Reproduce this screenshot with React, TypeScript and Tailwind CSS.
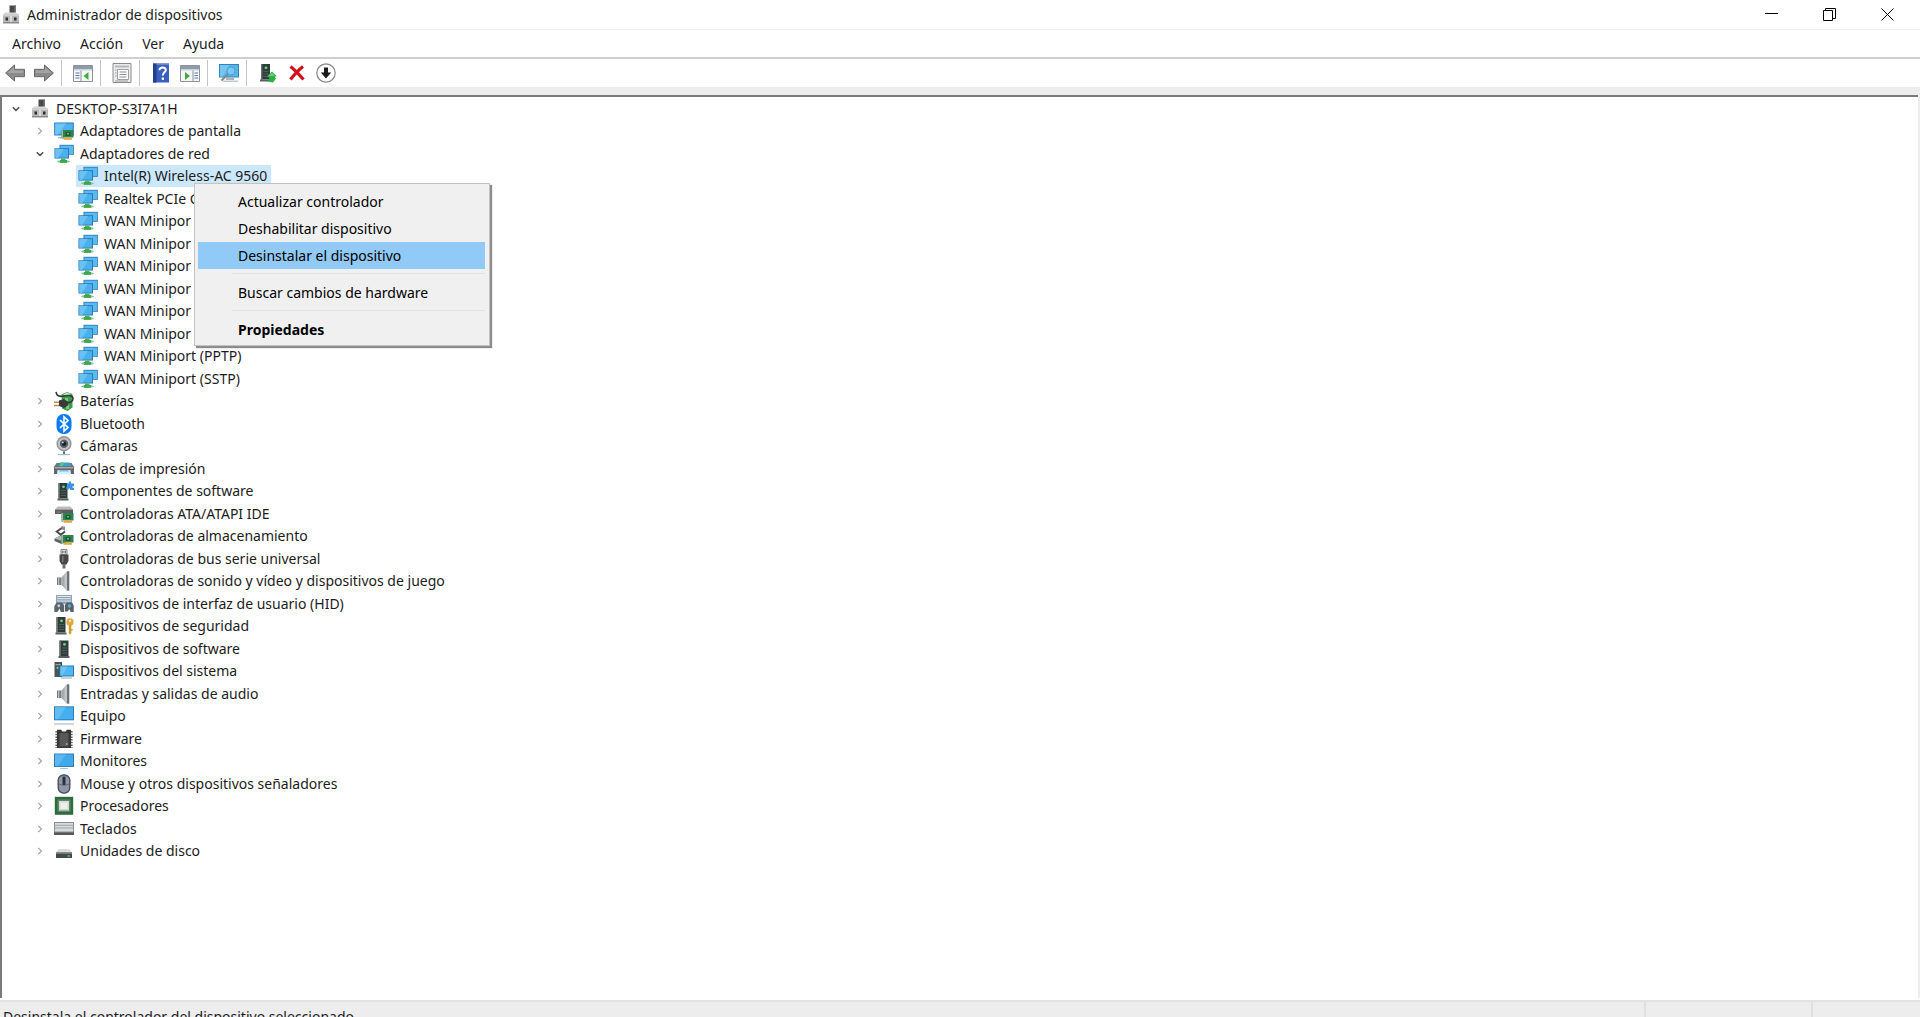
import type { ReactNode } from 'react';

type IconName =
  | 'computer' | 'display' | 'network' | 'battery' | 'bluetooth' | 'camera' | 'printer' | 'component'
  | 'ata' | 'storage' | 'usb' | 'speaker' | 'hid' | 'security' | 'software' | 'system' | 'pc'
  | 'firmware' | 'monitor' | 'mouse' | 'cpu' | 'keyboard' | 'disk';

interface TreeNode {
  label: string;
  icon: IconName;
  level: 0 | 1 | 2;
  expanded?: boolean;
  selected?: boolean;
}

const nodes: TreeNode[] = [
  { label: 'DESKTOP-S3I7A1H', icon: 'computer', level: 0, expanded: true },
  { label: 'Adaptadores de pantalla', icon: 'display', level: 1 },
  { label: 'Adaptadores de red', icon: 'network', level: 1, expanded: true },
  { label: 'Intel(R) Wireless-AC 9560', icon: 'network', level: 2, selected: true },
  { label: 'Realtek PCIe G', icon: 'network', level: 2 },
  { label: 'WAN Minipor', icon: 'network', level: 2 },
  { label: 'WAN Minipor', icon: 'network', level: 2 },
  { label: 'WAN Minipor', icon: 'network', level: 2 },
  { label: 'WAN Minipor', icon: 'network', level: 2 },
  { label: 'WAN Minipor', icon: 'network', level: 2 },
  { label: 'WAN Minipor', icon: 'network', level: 2 },
  { label: 'WAN Miniport (PPTP)', icon: 'network', level: 2 },
  { label: 'WAN Miniport (SSTP)', icon: 'network', level: 2 },
  { label: 'Baterías', icon: 'battery', level: 1 },
  { label: 'Bluetooth', icon: 'bluetooth', level: 1 },
  { label: 'Cámaras', icon: 'camera', level: 1 },
  { label: 'Colas de impresión', icon: 'printer', level: 1 },
  { label: 'Componentes de software', icon: 'component', level: 1 },
  { label: 'Controladoras ATA/ATAPI IDE', icon: 'ata', level: 1 },
  { label: 'Controladoras de almacenamiento', icon: 'storage', level: 1 },
  { label: 'Controladoras de bus serie universal', icon: 'usb', level: 1 },
  { label: 'Controladoras de sonido y vídeo y dispositivos de juego', icon: 'speaker', level: 1 },
  { label: 'Dispositivos de interfaz de usuario (HID)', icon: 'hid', level: 1 },
  { label: 'Dispositivos de seguridad', icon: 'security', level: 1 },
  { label: 'Dispositivos de software', icon: 'software', level: 1 },
  { label: 'Dispositivos del sistema', icon: 'system', level: 1 },
  { label: 'Entradas y salidas de audio', icon: 'speaker', level: 1 },
  { label: 'Equipo', icon: 'pc', level: 1 },
  { label: 'Firmware', icon: 'firmware', level: 1 },
  { label: 'Monitores', icon: 'monitor', level: 1 },
  { label: 'Mouse y otros dispositivos señaladores', icon: 'mouse', level: 1 },
  { label: 'Procesadores', icon: 'cpu', level: 1 },
  { label: 'Teclados', icon: 'keyboard', level: 1 },
  { label: 'Unidades de disco', icon: 'disk', level: 1 },
];

const indent = ['pl-0', 'pl-6', 'pl-12'];

// Small green board with gold contacts, shared by the adapter icons
const board = (
  <>
    <path d="M7.500 9h12v7.500h-12z" fill="#2f8350" />
    <path d="M7.500 9h1.500v9h-1.500z" fill="#9db8a4" />
    <path d="M11.500 11h5v4h-5z" fill="#1c5a36" />
    <path d="M13 12h2v1.500h-2z" fill="#6fb98a" />
    <path d="M9.500 16.500h8.500v2.300h-8.500z" fill="#e5a93c" />
  </>
);

const tower = (
  <>
    <path d="M5 1h9v15.500H5z" fill="#2f3c3b" />
    <path d="M5 1h1.500v15.500H5z" fill="#66716f" />
    <path d="M7.500 8.500h5M7.500 11h5M7.500 13.500h5" stroke="#4f5d5b" strokeWidth="1" />
    <circle cx="10" cy="4.800" r="1.400" fill="#56e07a" />
    <path d="M4 16.500h11v2H4z" fill="#59605f" />
  </>
);

const icons: Record<IconName, ReactNode> = {
  computer: (
    <>
      <path d="M8.500 .5H15v9H8.500z" fill="#4a4a4a" />
      <path d="M13.500 .5H15v9h-1.500z" fill="#777" />
      <path d="M3 9l1-1.500h11L16.500 9z" fill="#d8d8d8" />
      <path d="M2 9h16v9H2z" fill="#b8b8b8" />
      <path d="M2 9h16v2H2z" fill="#cfcfcf" />
      <path d="M2 17h16v1.500H2z" fill="#8b8b8b" />
      <path d="M4.500 12.500h2.500v3H4.500zM13 12.500h2.500v3H13z" fill="#2e2e2e" />
      <path d="M9.200 11h1.600v6H9.200z" fill="#e4e4e4" />
    </>
  ),
  display: (
    <>
      <path d="M.2 1.500h19.600v13H.2z" fill="#2279ba" />
      <path d="M1.200 2.500h17.600v11H1.200z" fill="#4fb2ec" />
      <path d="M1.200 2.500h11l-8 11h-3z" fill="#6fc5f5" />
      <path d="M4 16h6v1.500H4z" fill="#a9bccb" />
      {board}
    </>
  ),
  network: (
    <>
      <path d="M5.500 .8h14.300v10H5.500z" fill="#2779b4" />
      <path d="M6.300 1.600H19v8.400H6.300z" fill="#58baf0" />
      <path d="M.5 4.300h14.500v10.200H.5z" fill="#236fa8" />
      <path d="M1.300 5.100h12.900v8.600H1.300z" fill="#4bb0ec" />
      <path d="M1.300 5.100h8.500l-5.500 8.600h-3z" fill="#68c2f5" />
      <path d="M7 14.500h4.500v2.500H7z" fill="#4cb05e" />
      <ellipse cx="9.500" cy="17.500" rx="6.500" ry="1.500" fill="#7ecb8a" />
      <path d="M6 16h7v2.800H6z" fill="#3fa552" />
    </>
  ),
  battery: (
    <>
      <path d="M7.500 3.500L13 1l5.500 2v13.500L13.500 20 8 17.500z" fill="#3f9a4a" />
      <path d="M9 3.500l4-2 4 1.600-4 1.900z" fill="#bfe0c0" />
      <path d="M11 7h3v3h-3zM12 14h3v4h-3z" fill="#74cf78" />
      <path d="M2 .8c.5 4 3 5.200 8 4.200s9-.5 9 2.500-3 4.500-6 4" stroke="#333b36" strokeWidth="1.600" fill="none" />
      <path d="M5 9.500L10 8l4 3v3.500L10 17l-5-2z" fill="#3a3a36" />
      <path d="M0 10.500h5V12H0zM0 13.800h5v1.500H0z" fill="#b39159" />
    </>
  ),
  bluetooth: (
    <>
      <rect x="2.500" y="0" width="15" height="20" rx="7" fill="#0a7cf0" />
      <path d="M6 6.200l8 7.300-4 3.700V2.800l4 3.700-8 7.300" fill="none" stroke="#fff" strokeWidth="1.600" />
    </>
  ),
  camera: (
    <>
      <circle cx="10" cy="7.700" r="7.600" fill="#97999b" />
      <circle cx="10" cy="7.700" r="6" fill="#c5c8ca" />
      <circle cx="10" cy="7.700" r="4.200" fill="#5b6064" />
      <circle cx="10" cy="7.700" r="2.200" fill="#1c2228" />
      <circle cx="8.800" cy="6.500" r="1" fill="#b9c5cf" />
      <path d="M9 15.300h2v3H9z" fill="#707274" />
      <path d="M4 18h12v1.200H4z" fill="#9fc0d0" />
    </>
  ),
  printer: (
    <>
      <path d="M2.500 4h15L20 8H0z" fill="#6c777e" />
      <path d="M6 3.500h9.500l1.500 4H4.500z" fill="#3f9fc4" />
      <path d="M7 3.500h3.500l-2 4H5.500z" fill="#58c294" />
      <path d="M0 7.500h20V15h-3.500v-3.500h-13V15H0z" fill="#62676b" />
      <path d="M.8 8h18.400v1.500H.8z" fill="#a5abae" />
      <path d="M4 11h12l1 4.500H3z" fill="#d6edf9" />
      <path d="M5.500 11h9l.5 1.500H5z" fill="#7dbfe3" />
    </>
  ),
  component: (
    <>
      <g transform="translate(-.5 1)">{tower}</g>
      <path d="M12.500 2.500h2.200v-2h2.300v2h3v2.800h-1.500v1.500H20V9h-4V7.500h-1.500V9h-2V5h1z" fill="#3a94e0" />
    </>
  ),
  ata: (
    <>
      <path d="M3.500 2.500h13l2.500 3H1z" fill="#bcbcbc" />
      <path d="M1 5.500h18v4.500H1z" fill="#5c5c5c" />
      <path d="M2.500 7.500h5v1h-5z" fill="#8b8b8b" />
      {board}
    </>
  ),
  storage: (
    <>
      <path d="M9 1.200L2.800 5.500l4 3.300L11 5.500" fill="none" stroke="#4a4a4a" strokeWidth="2" />
      <path d="M7 .5h4v4l-3-1z" fill="#8c8c8c" />
      <path d="M.5 12.500L7.500 9l6.500 2.500v4L7.500 18l-7-3z" fill="#5d6363" />
      <path d="M.5 12.500l7-3 5 2-5.500 3z" fill="#b4bbbb" />
      {board}
    </>
  ),
  usb: (
    <>
      <path d="M7 .5h6v5H7z" fill="#d1d1d1" stroke="#8a8a8a" strokeWidth="1" />
      <path d="M8.300 2h1v2h-1zM10.800 2h1v2h-1z" fill="#555" />
      <path d="M5.500 5.500h9V12l-2 3.500h-5l-2-3.500z" fill="#484848" />
      <path d="M8 7h1.500v6H8z" fill="#777" />
      <path d="M8.500 15h3v4.500h-3z" fill="#6e6e6e" />
    </>
  ),
  speaker: (
    <>
      <path d="M3 6.500h4.500V14H3z" fill="#777c7f" />
      <path d="M7.500 6.500L13 .3v19.400L7.500 14z" fill="#a5a9ab" />
      <path d="M10.500 3.200L13 .3v19.400l-2.500-2.700z" fill="#c3c6c8" />
      <path d="M13 .3h2.300v19.400H13z" fill="#6c7073" />
      <path d="M4 6.500h1.200V14H4z" fill="#b9bdbf" />
    </>
  ),
  hid: (
    <>
      <path d="M2 1h16v9H2z" fill="#8fa5b4" />
      <path d="M3 2.500h14M3 4.700h14M3 7h14" stroke="#dfe8ee" strokeWidth="1" />
      <path d="M.3 18v-6L2.800 8.500h5L10 11v7H6.800L5.500 14.500 3.500 18z" fill="#5c656c" />
      <path d="M10.800 17.500V11L13 8.500h5l1.700 3v6.500h-3l-1.500-3-1.500 2.500z" fill="#57616a" />
      <circle cx="4.800" cy="11.800" r="1.400" fill="#c4d8e6" />
      <circle cx="15.500" cy="12" r="1.700" fill="#63a9d6" />
    </>
  ),
  security: (
    <>
      <g transform="translate(-2.500 0)">{tower}</g>
      <circle cx="16" cy="6" r="3.700" fill="#e1ab3d" />
      <circle cx="16" cy="4.800" r="1.100" fill="#fff7df" />
      <path d="M14.800 9h2.500v8.500l-1.200 1-1.300-1.200z" fill="#d39a2c" />
      <path d="M17 13h1.700v1.500H17z" fill="#d39a2c" />
    </>
  ),
  software: <g transform="translate(.5 .5)">{tower}</g>,
  system: (
    <>
      <path d="M.5 1H8v15H.5z" fill="#4a555a" />
      <path d="M1.500 3h5.500v1.200H1.500z" fill="#8f9ba0" />
      <circle cx="3.500" cy="6.800" r="1" fill="#75d58d" />
      <path d="M5.500 4.500H20v11H5.500z" fill="#2378b5" />
      <path d="M6.500 5.500H19v9H6.500z" fill="#51b6ef" />
      <path d="M6.500 5.500h7l-5 9h-2z" fill="#6cc4f6" />
      <path d="M7 16.500h11v1H7z" fill="#91a5b2" />
    </>
  ),
  pc: (
    <>
      <path d="M0 .3h20v14H0z" fill="#2d7fb8" />
      <path d="M1 1.300h18v12H1z" fill="#45aeee" />
      <path d="M1 1.300h11l-8 12H1z" fill="#62bdf3" />
      <path d="M0 17.200h20v1.600H0z" fill="#c5ccd0" />
    </>
  ),
  firmware: (
    <>
      <path d="M3 .8h4.200l1 1.700h3.600l1-1.700H17V19H3z" fill="#353535" />
      <path d="M5.500 4h9v13.500h-9z" fill="#575757" />
      <path d="M2.300 2v17M17.700 2v17" stroke="#5f5f5f" strokeWidth="1.800" strokeDasharray="1.500 1.200" />
      <circle cx="12.700" cy="15" r="1" fill="#a3a3a3" />
    </>
  ),
  monitor: (
    <>
      <path d="M0 2.500h20V16H0z" fill="#347fae" />
      <path d="M1 3.500h18V15H1z" fill="#3fa9ec" />
      <path d="M1 3.500h11L4 15H1z" fill="#59b7f2" />
      <path d="M6 17h8v1H6z" fill="#9ccbe6" />
    </>
  ),
  mouse: (
    <>
      <rect x="3.500" y=".3" width="13" height="19.400" rx="6" fill="#4c5260" />
      <rect x="4.900" y="1.700" width="10.200" height="16.600" rx="4.800" fill="#8e97a8" />
      <path d="M5 10c3 1.500 7 1.500 10 0" stroke="#5d6577" fill="none" />
      <rect x="8.500" y="2.500" width="3" height="8.500" rx="1" fill="#2c303a" />
    </>
  ),
  cpu: (
    <>
      <path d="M.8 .8h18.400v18H.8z" fill="#2f6b3f" />
      <path d="M3.500 3.500h13V16h-13z" fill="#5d8a66" />
      <path d="M5 5h10v9.500H5z" fill="#d5d9d6" />
      <path d="M6.500 6.500h7V13h-7z" fill="#eceeec" />
    </>
  ),
  keyboard: (
    <>
      <path d="M0 3h20v13H0z" fill="#8b9092" />
      <path d="M1 4h18v8.500H1z" fill="#d7dadb" />
      <path d="M1 6.300h18M1 9h18" stroke="#92989a" strokeWidth=".8" />
      <path d="M0 13.500h20V16H0z" fill="#55595b" />
    </>
  ),
  disk: (
    <>
      <path d="M4.500 8h11l2.500 4H2z" fill="#d9dbdc" />
      <path d="M2 11.500h16V17H2z" fill="#46494a" />
      <path d="M2 11.500h16v1.300H2z" fill="#808486" />
      <path d="M13.500 14.500H16v1h-2.500z" fill="#7fdc92" />
    </>
  ),
};

function Icon({ name }: { name: IconName }) {
  return (
    <svg viewBox="0 0 20 20" className="size-5" aria-hidden="true">
      {icons[name]}
    </svg>
  );
}

function Arrow({ flip = false }: { flip?: boolean }) {
  return (
    <svg viewBox="0 0 20 18" className={flip ? 'w-5 -scale-x-100' : 'w-5'} aria-hidden="true">
      <path d="M.6 9L9.500 1V5.300h10v7.400h-10V17z" fill="#8b8b8b" stroke="#6a6a6a" strokeWidth="1" />
      <path d="M2.500 9L9 3.300v3.200h9.200V9z" fill="#a5a5a5" />
    </svg>
  );
}

function PanelIcon({ right = false }: { right?: boolean }) {
  return (
    <svg viewBox="0 0 20 18" className="w-5" aria-hidden="true">
      <path d="M.5 1.500h19v16H.5z" fill="#f5f6f7" stroke="#8b9299" />
      <path d="M1 2h18v3H1z" fill="#8c9cab" />
      <path d="M1 5h18v1.500H1z" fill="#cbd2d8" />
      {right ? (
        <>
          <path d="M13 6.500v11" stroke="#8b9299" />
          <path d="M14.500 9H18M14.500 11.500H18M14.500 14H18" stroke="#5479b4" strokeWidth="1.200" />
          <path d="M5 8l5 4-5 4z" fill="#3fae3f" />
        </>
      ) : (
        <>
          <path d="M8 6.500v11" stroke="#8b9299" />
          <path d="M2.500 9h4M2.500 11.500h4M2.500 14h4" stroke="#5479b4" strokeWidth="1.200" />
          <path d="M15.500 8l-5 4 5 4z" fill="#3fae3f" />
        </>
      )}
    </svg>
  );
}

const toolGroups: { label: string; icon: ReactNode }[][] = [
  [
    { label: 'Atrás', icon: <Arrow /> },
    { label: 'Adelante', icon: <Arrow flip /> },
  ],
  [{ label: 'Mostrar u ocultar árbol', icon: <PanelIcon /> }],
  [
    {
      label: 'Propiedades',
      icon: (
        <svg viewBox="0 0 20 20" className="size-5" aria-hidden="true">
          <path d="M1 .5h18v19H1z" fill="#ececec" stroke="#8c8c8c" />
          <path d="M3 2.500h14v2H3z" fill="#b4b9bd" />
          <path d="M5.500 6.500h11v10h-11z" fill="#fff" stroke="#a0a0a0" />
          <path d="M7.500 9h7M7.500 11.500h7M7.500 14h7" stroke="#858b90" />
          <path d="M3 7h1.500M3 10h1.500M3 13h1.500M3 18h13" stroke="#9a9a9a" />
        </svg>
      ),
    },
  ],
  [
    {
      label: 'Ayuda',
      icon: (
        <svg viewBox="0 0 18 20" className="h-5" aria-hidden="true">
          <path d="M1 .5h16v19H1z" fill="#3b5fbe" />
          <path d="M1 .5h3.500v19H1z" fill="#24408c" />
          <path d="M4.500 .5H17V2H4.500z" fill="#6784cf" />
          <path d="M7.500 7.300c0-4 6.300-3.600 6.300-.3 0 2.300-3 2.500-3 5.500" fill="none" stroke="#fff" strokeWidth="2" />
          <path d="M9.700 14.500H12v2.300H9.700z" fill="#fff" />
        </svg>
      ),
    },
    { label: 'Mostrar u ocultar panel de acciones', icon: <PanelIcon right /> },
  ],
  [
    {
      label: 'Buscar cambios de hardware',
      icon: (
        <svg viewBox="0 0 20 20" className="size-5" aria-hidden="true">
          <path d="M0 1h20v13.500H0z" fill="#3384bb" />
          <path d="M1 2h18v11.500H1z" fill="#55b5eb" />
          <path d="M1 2h9L4 13.500H1z" fill="#74c6f3" />
          <path d="M7 14.500h8V17H7z" fill="#a9b4bc" />
          <path d="M4 17.500h15V19H4z" fill="#c2c9ce" />
          <circle cx="12" cy="8" r="4" fill="#8dd3f6" fillOpacity=".7" stroke="#4ea0cf" />
          <path d="M9 11l-6.500 6.500" stroke="#7c8a93" strokeWidth="2" />
        </svg>
      ),
    },
  ],
  [
    {
      label: 'Actualizar controlador',
      icon: (
        <svg viewBox="0 0 20 20" className="size-5" aria-hidden="true">
          <g transform="translate(-2 0)">{tower}</g>
          <path d="M8.500 13.500L14 8.500l5 5h-2.500l1.500 2-3 4-5.500-1 2-2.500-1-2z" fill="#2fae48" />
          <path d="M10.500 13L14 10l2.500 2.500z" fill="#7bdc84" />
        </svg>
      ),
    },
    {
      label: 'Desinstalar dispositivo',
      icon: (
        <svg viewBox="0 0 16 16" className="size-4" aria-hidden="true">
          <path d="M1.500 1.500C6 5 10.500 10 14.500 14.500M14 1.500C9.500 5 5 10 1.500 14.500" stroke="#d0101c" strokeWidth="3.200" />
        </svg>
      ),
    },
    {
      label: 'Deshabilitar dispositivo',
      icon: (
        <svg viewBox="0 0 20 20" className="size-5" aria-hidden="true">
          <circle cx="10" cy="10" r="9.200" fill="#fff" stroke="#868686" strokeWidth="1.200" />
          <path d="M8 4.500h4v5h3.200L10 15.500 4.800 9.500H8z" fill="#1b1b1b" />
        </svg>
      ),
    },
  ],
];

function Chevron({ open }: { open: boolean }) {
  return (
    <svg viewBox="0 0 10 10" className="size-[10px]" fill="none" aria-hidden="true">
      {open ? (
        <path d="M1.800 3.200L5 6.400l3.200-3.200" stroke="#505050" strokeWidth="1.500" />
      ) : (
        <path d="M3.300 1.800L6.500 5 3.300 8.200" stroke="#a3a3a3" strokeWidth="1.200" />
      )}
    </svg>
  );
}

function TitleBar() {
  return (
    <header className="flex h-[30px] shrink-0 items-center border-b border-[#efefef] pl-px pr-1">
      <Icon name="computer" />
      <h1 className="flex-1 pl-[6px]">Administrador de dispositivos</h1>
      <button aria-label="Minimizar" className="flex h-full w-[58px] items-center justify-center">
        <svg viewBox="0 0 13 13" className="size-[13px]" stroke="#000" aria-hidden="true">
          <path d="M0 5.500h13" />
        </svg>
      </button>
      <button aria-label="Restaurar" className="flex h-full w-[58px] items-center justify-center">
        <svg viewBox="0 0 13 13" className="size-[13px]" fill="none" stroke="#000" aria-hidden="true">
          <path d="M.5 2.500h9v10h-9zM2.500 2.500v-2h10v10h-3" />
        </svg>
      </button>
      <button aria-label="Cerrar" className="flex h-full w-[58px] items-center justify-center">
        <svg viewBox="0 0 13 13" className="size-[13px]" stroke="#000" aria-hidden="true">
          <path d="M.5 .5l12 12M12.500 .5l-12 12" />
        </svg>
      </button>
    </header>
  );
}

function Toolbar() {
  return (
    <div role="toolbar" className="flex h-[28px] shrink-0 items-center">
      {toolGroups.map((group, i) => (
        <div key={i} className="flex items-center">
          {i > 0 && <div className="ml-[3px] mr-[6px] h-[26px] w-px bg-[#c4c4c4]" />}
          {group.map((tool) => (
            <button key={tool.label} aria-label={tool.label} className="flex w-[29px] justify-center">
              {tool.icon}
            </button>
          ))}
        </div>
      ))}
    </div>
  );
}

function MenuItem({ label, active = false, bold = false }: { label: string; active?: boolean; bold?: boolean }) {
  return (
    <button
      role="menuitem"
      className={`block h-[27px] w-full pl-10 text-left ${active ? 'bg-[#91c9f7]' : ''} ${bold ? 'font-bold' : ''}`}
    >
      {label}
    </button>
  );
}

function ContextMenu() {
  return (
    <div
      role="menu"
      className="absolute left-[118px] top-[18px] z-10 w-[296px] border border-[#c3c3c3] bg-[#f0f0f0] pb-[2px] pl-[3px] pr-[4px] pt-1 text-black shadow-[2px_2px_1px_#8c8c8c]"
    >
      <MenuItem label="Actualizar controlador" />
      <MenuItem label="Deshabilitar dispositivo" />
      <MenuItem label="Desinstalar el dispositivo" active />
      <hr className="mb-[5px] ml-[34px] mt-1 border-[#e2e2e2]" />
      <MenuItem label="Buscar cambios de hardware" />
      <hr className="mb-[5px] ml-[34px] mt-1 border-[#e2e2e2]" />
      <MenuItem label="Propiedades" bold />
    </div>
  );
}

function TreeRow({ node }: { node: TreeNode }) {
  return (
    <li
      role="treeitem"
      aria-level={node.level + 1}
      aria-expanded={node.level < 2 ? !!node.expanded : undefined}
      aria-selected={!!node.selected}
      className={`flex odd:h-[23px] even:h-[22px] ${indent[node.level]}`}
    >
      <span className="flex w-6 items-center justify-center">
        {node.level < 2 && <Chevron open={!!node.expanded} />}
      </span>
      <div className={`relative flex items-center pr-1 ${node.selected ? 'bg-[#cce8ff]' : ''}`}>
        <span className="flex w-6 justify-center">
          <Icon name={node.icon} />
        </span>
        <span className="whitespace-nowrap pl-1">{node.label}</span>
        {node.selected && <ContextMenu />}
      </div>
    </li>
  );
}

export default function App() {
  return (
    <div className="flex h-screen flex-col overflow-hidden bg-white font-['Noto_Sans',sans-serif] text-[14px] leading-[22px] text-[#1c1c1c]">
      <TitleBar />
      <nav className="flex h-[29px] shrink-0 items-center gap-[19px] border-b-2 border-[#cfcfcf] pl-3">
        <button>Archivo</button>
        <button>Acción</button>
        <button>Ver</button>
        <button>Ayuda</button>
      </nav>
      <Toolbar />
      <main className="flex min-h-0 flex-1 flex-col bg-[#ededed] pr-[2px] pt-2">
        <ul
          role="tree"
          className="min-h-0 flex-1 border-l-2 border-t-2 border-[#7a7a7a] bg-white pl-[2px]"
        >
          {nodes.map((node, i) => (
            <TreeRow key={i} node={node} />
          ))}
        </ul>
      </main>
      <footer className="mt-[2px] flex h-[17px] shrink-0 border-t-2 border-[#e2e2e2] bg-[#ededed]">
        <p className="flex-1 pl-[3px] pt-1">Desinstala el controlador del dispositivo seleccionado</p>
        <div className="w-[167px] border-l-2 border-[#e0e0e0]" />
        <div className="w-[109px] border-l-2 border-[#e0e0e0]" />
      </footer>
    </div>
  );
}
